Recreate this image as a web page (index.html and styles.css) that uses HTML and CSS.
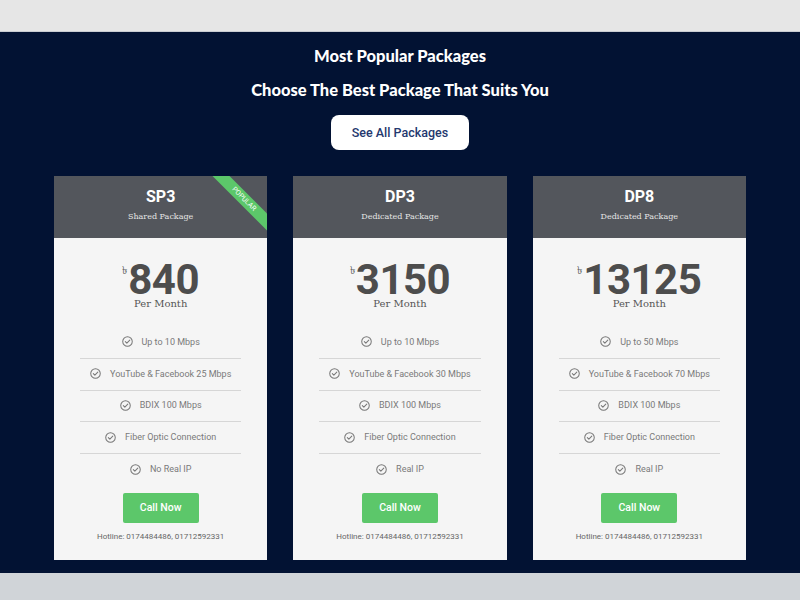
FILE: index.html
```html
<!DOCTYPE html>
<html>
<head>
<meta charset="utf-8">
<link rel="stylesheet" href="styles.css">
</head>
<body>
<div class="topband"></div>
<section class="packages">
  <h2 class="title">Most Popular Packages</h2>
  <h2 class="subtitle">Choose The Best Package That Suits You</h2>
  <div class="btn-wrap"><a class="see-all">See All Packages</a></div>
  <div class="cards">
    <div class="card">
      <div class="card-head">
        <h3 class="name">SP3</h3>
        <div class="kind">Shared Package</div>
        <div class="ribbon">POPULAR</div>
      </div>
      <div class="card-body">
        <div class="price"><span class="cur">৳</span><span class="amt">840</span></div>
        <div class="per">Per Month</div>
        <ul class="features">
          <li><svg class="chk" viewBox="0 0 12 12"><circle cx="6" cy="6" r="5.2"/><path d="M3.6 6.1 5.3 7.8 8.5 4.4"/></svg>Up to 10 Mbps</li>
          <li><svg class="chk" viewBox="0 0 12 12"><circle cx="6" cy="6" r="5.2"/><path d="M3.6 6.1 5.3 7.8 8.5 4.4"/></svg>YouTube &amp; Facebook 25 Mbps</li>
          <li><svg class="chk" viewBox="0 0 12 12"><circle cx="6" cy="6" r="5.2"/><path d="M3.6 6.1 5.3 7.8 8.5 4.4"/></svg>BDIX 100 Mbps</li>
          <li><svg class="chk" viewBox="0 0 12 12"><circle cx="6" cy="6" r="5.2"/><path d="M3.6 6.1 5.3 7.8 8.5 4.4"/></svg>Fiber Optic Connection</li>
          <li><svg class="chk" viewBox="0 0 12 12"><circle cx="6" cy="6" r="5.2"/><path d="M3.6 6.1 5.3 7.8 8.5 4.4"/></svg>No Real IP</li>
        </ul>
        <div class="call-wrap"><a class="call">Call Now</a></div>
        <div class="hotline">Hotline: 0174484486, 01712592331</div>
      </div>
    </div>
    <div class="card">
      <div class="card-head">
        <h3 class="name">DP3</h3>
        <div class="kind">Dedicated Package</div>
      </div>
      <div class="card-body">
        <div class="price"><span class="cur">৳</span><span class="amt">3150</span></div>
        <div class="per">Per Month</div>
        <ul class="features">
          <li><svg class="chk" viewBox="0 0 12 12"><circle cx="6" cy="6" r="5.2"/><path d="M3.6 6.1 5.3 7.8 8.5 4.4"/></svg>Up to 10 Mbps</li>
          <li><svg class="chk" viewBox="0 0 12 12"><circle cx="6" cy="6" r="5.2"/><path d="M3.6 6.1 5.3 7.8 8.5 4.4"/></svg>YouTube &amp; Facebook 30 Mbps</li>
          <li><svg class="chk" viewBox="0 0 12 12"><circle cx="6" cy="6" r="5.2"/><path d="M3.6 6.1 5.3 7.8 8.5 4.4"/></svg>BDIX 100 Mbps</li>
          <li><svg class="chk" viewBox="0 0 12 12"><circle cx="6" cy="6" r="5.2"/><path d="M3.6 6.1 5.3 7.8 8.5 4.4"/></svg>Fiber Optic Connection</li>
          <li><svg class="chk" viewBox="0 0 12 12"><circle cx="6" cy="6" r="5.2"/><path d="M3.6 6.1 5.3 7.8 8.5 4.4"/></svg>Real IP</li>
        </ul>
        <div class="call-wrap"><a class="call">Call Now</a></div>
        <div class="hotline">Hotline: 0174484486, 01712592331</div>
      </div>
    </div>
    <div class="card">
      <div class="card-head">
        <h3 class="name">DP8</h3>
        <div class="kind">Dedicated Package</div>
      </div>
      <div class="card-body">
        <div class="price"><span class="cur">৳</span><span class="amt">13125</span></div>
        <div class="per">Per Month</div>
        <ul class="features">
          <li><svg class="chk" viewBox="0 0 12 12"><circle cx="6" cy="6" r="5.2"/><path d="M3.6 6.1 5.3 7.8 8.5 4.4"/></svg>Up to 50 Mbps</li>
          <li><svg class="chk" viewBox="0 0 12 12"><circle cx="6" cy="6" r="5.2"/><path d="M3.6 6.1 5.3 7.8 8.5 4.4"/></svg>YouTube &amp; Facebook 70 Mbps</li>
          <li><svg class="chk" viewBox="0 0 12 12"><circle cx="6" cy="6" r="5.2"/><path d="M3.6 6.1 5.3 7.8 8.5 4.4"/></svg>BDIX 100 Mbps</li>
          <li><svg class="chk" viewBox="0 0 12 12"><circle cx="6" cy="6" r="5.2"/><path d="M3.6 6.1 5.3 7.8 8.5 4.4"/></svg>Fiber Optic Connection</li>
          <li><svg class="chk" viewBox="0 0 12 12"><circle cx="6" cy="6" r="5.2"/><path d="M3.6 6.1 5.3 7.8 8.5 4.4"/></svg>Real IP</li>
        </ul>
        <div class="call-wrap"><a class="call">Call Now</a></div>
        <div class="hotline">Hotline: 0174484486, 01712592331</div>
      </div>
    </div>
  </div>
</section>
<div class="bottomband"></div>
</body>
</html>
```

FILE: styles.css
```css
* { box-sizing: border-box; }
html, body { margin: 0; padding: 0; }
body {
  background: #d0d4d8;
  font-family: Roboto, "Liberation Sans", sans-serif;
  height: 600px;
  overflow: hidden;
}
.topband { height: 32px; background: #e6e6e6; border-bottom: 1px solid #c9ccd2; }
.packages {
  background: #021233;
  padding: 14px 0 13px;
  text-align: center;
}
.title, .subtitle {
  margin: 0;
  color: #fff;
  font-family: Lato, "DejaVu Sans", sans-serif;
  font-weight: 900;
  font-size: 16.5px;
  line-height: 20px;
}
.subtitle { margin-top: 14px; }
.btn-wrap { margin-top: 15px; display: flex; justify-content: center; }
.see-all {
  display: block;
  width: 138px;
  height: 35px;
  line-height: 35px;
  background: #fff;
  border-radius: 8px;
  color: #24386e;
  font-family: Roboto, sans-serif;
  font-weight: 500;
  font-size: 12.5px;
}
.cards {
  margin: 26px auto 0;
  width: 692px;
  display: grid;
  grid-template-columns: repeat(3, 1fr);
  gap: 26px;
}
.card { background: #f5f5f5; height: 384px; text-align: center; }
.card-head {
  position: relative;
  overflow: hidden;
  height: 62px;
  background: #53565c;
  padding-top: 11px;
  color: #fff;
}
.name {
  margin: 0;
  font-family: Roboto, sans-serif;
  font-weight: 700;
  font-size: 16px;
  line-height: 20px;
}
.kind {
  margin-top: 4px;
  font-family: "DejaVu Serif", serif;
  font-size: 8px;
  line-height: 12px;
  color: #e6e6e6;
}
.ribbon {
  position: absolute;
  left: 140px;
  top: 17px;
  width: 100px;
  height: 12px;
  line-height: 12px;
  background: #5cc76a;
  color: #fff;
  font-size: 7px;
  font-family: Roboto, sans-serif;
  transform: rotate(45deg);
}
.card-body { padding: 24px 26px 0; }
.price {
  display: flex;
  justify-content: center;
  align-items: flex-start;
  color: #4d4d4d;
  height: 36px;
}
.cur {
  font-family: "Noto Sans", "DejaVu Sans", sans-serif;
  font-size: 11px;
  line-height: 12px;
  margin-top: 2px;
  margin-right: 1px;
  color: #555;
}
.amt {
  font-family: Roboto, sans-serif;
  font-weight: 700;
  font-size: 42px;
  line-height: 36px;
  letter-spacing: -0.5px;
}
.per {
  font-family: "DejaVu Serif", serif;
  font-size: 10px;
  line-height: 12px;
  color: #555;
}
.features {
  list-style: none;
  margin: 17px 0 0;
  padding: 0;
}
.features li {
  height: 31.75px;
  display: flex;
  align-items: center;
  justify-content: center;
  border-bottom: 1px solid #d6d6d6;
  font-size: 9px;
  color: #7a7a7a;
  padding-bottom: 1px;
}
.features li:last-child { border-bottom: none; }
.chk {
  width: 11px;
  height: 11px;
  margin-right: 9px;
  fill: none;
  stroke: #777;
  stroke-width: 1.1;
  stroke-linecap: round;
  stroke-linejoin: round;
}
.call-wrap { display: flex; justify-content: center; margin-top: 7px; }
.call {
  display: block;
  width: 76px;
  height: 30px;
  line-height: 30px;
  background: #5cc76a;
  border-radius: 2px;
  color: #fff;
  font-weight: 500;
  font-size: 10.5px;
}
.hotline {
  margin-top: 9px;
  font-size: 8px;
  line-height: 10px;
  color: #666;
}
.bottomband { height: 27px; background: #d0d4d8; }
```
